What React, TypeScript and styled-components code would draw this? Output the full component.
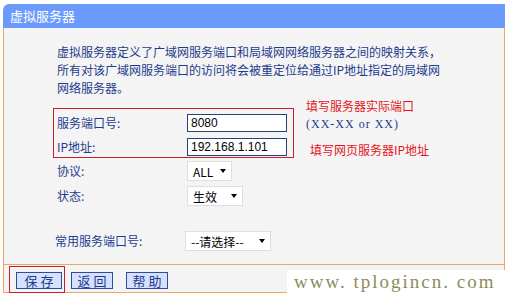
import styled, { createGlobalStyle } from "styled-components";

const GlobalStyle = createGlobalStyle`
  html, body {
    margin: 0;
    padding: 0;
    background: #ffffff;
  }
  body {
    font-family: "Noto Sans CJK SC", "Noto Sans", sans-serif;
  }
`;

const Page = styled.div`
  position: relative;
  width: 508px;
  height: 293px;
  overflow: hidden;
  box-sizing: border-box;
  padding: 4px 0 0 3px;
`;

const Panel = styled.div`
  width: 502px;
`;

const TitleBar = styled.div`
  height: 24px;
  padding-left: 7px;
  background: #6a9bfc;
  border-top-left-radius: 6px;
  color: #ffffff;
  font-size: 13px;
  line-height: 24px;
`;

const Body = styled.div`
  display: flex;
  flex-direction: column;
  align-items: flex-start;
  padding: 15px 0 13px 49px;
  background: #f4f4f4;
  border: 1px solid #f0a860;
  border-top: none;
`;

const Intro = styled.p`
  margin: 0 0 11px 4px;
  color: #1e3c8c;
  font-size: 12px;
  line-height: 18px;
`;

const Group = styled.div`
  display: flex;
  align-items: flex-start;
`;

const Marked = styled.div`
  display: flex;
  flex-direction: column;
  gap: 6px;
  width: 236px;
  padding: 5px 0 1px 3px;
  border: 1px solid #cc1d2c;
`;

const Hints = styled.div`
  display: flex;
  flex-direction: column;
  margin: -12px 0 0 12px;
`;

const Hint = styled.div<{ $indent?: number; $top?: number }>`
  margin: ${(p) => p.$top ?? 0}px 0 0 ${(p) => p.$indent ?? 0}px;
  color: #e3151c;
  font-size: 12px;
  line-height: 19px;
`;

const Format = styled.div`
  color: #1e3c8c;
  font-family: "Liberation Serif", serif;
  font-size: 12px;
  letter-spacing: 1px;
  line-height: 19px;
`;

const Row = styled.div<{ $top?: number; $pad?: number }>`
  display: grid;
  grid-template-columns: 130px auto;
  align-items: center;
  margin-top: ${(p) => p.$top ?? 0}px;
  padding-left: ${(p) => p.$pad ?? 0}px;
`;

const Label = styled.span`
  color: #1e3c8c;
  font-size: 12px;
  line-height: 18px;
`;

const TextInput = styled.input`
  box-sizing: border-box;
  display: block;
  width: 100px;
  height: 18px;
  margin: 0;
  padding: 0 3px;
  border: 1px solid #23437f;
  background: #ffffff;
  color: #000000;
  font-family: "Liberation Sans", sans-serif;
  font-size: 12px;
  outline: none;
`;

const SelectBox = styled.div<{ $width: number }>`
  box-sizing: border-box;
  display: flex;
  align-items: center;
  justify-content: space-between;
  width: ${(p) => p.$width}px;
  height: 20px;
  padding: 0 5px 0 5px;
  background: #ffffff;
  border: 1px solid #dedede;
  color: #000000;
  font-size: 12px;
`;

const Arrow = styled.span`
  width: 0;
  height: 0;
  border-left: 3.5px solid transparent;
  border-right: 3.5px solid transparent;
  border-top: 4px solid #000000;
`;

const Footer = styled.div`
  display: flex;
  align-items: flex-start;
  gap: 13px;
  height: 20px;
  padding: 7px 0 0 12px;
  background: #f4f4f4;
  border-left: 1px solid #f0a860;
  border-right: 1px solid #f0a860;
  border-bottom: 1px solid #f0a860;
`;

const SaveMark = styled.div`
  position: relative;
  margin-right: -4px;

  &::after {
    content: "";
    position: absolute;
    top: -6px;
    left: -7px;
    right: -3px;
    bottom: -4px;
    border: 1px solid #cc1d2c;
    pointer-events: none;
  }
`;

const Button = styled.button<{ $width: number }>`
  box-sizing: border-box;
  display: block;
  width: ${(p) => p.$width}px;
  height: 17px;
  margin: 0;
  padding: 0;
  background: #d6e0ff;
  border: 1px solid #2d4d9c;
  color: #1e3c8c;
  font-family: "Noto Sans CJK SC", sans-serif;
  font-size: 13px;
  line-height: 15px;
  letter-spacing: 3px;
  text-indent: 3px;
`;

const Watermark = styled.div`
  position: absolute;
  right: 0;
  bottom: 0;
  width: 221px;
  height: 23px;
  box-sizing: border-box;
  padding-left: 7px;
  background: #ffffff;
  color: #8d8b5a;
  font-family: "Liberation Serif", serif;
  font-size: 19px;
  letter-spacing: 2px;
  line-height: 23px;
  white-space: nowrap;
`;

const Select = ({ width, value }: { width: number; value: string }) => (
  <SelectBox $width={width}>
    <span>{value}</span>
    <Arrow />
  </SelectBox>
);

export default function App() {
  return (
    <Page>
      <GlobalStyle />
      <Panel>
        <TitleBar>虚拟服务器</TitleBar>
        <Body>
          <Intro>
            虚拟服务器定义了广域网服务端口和局域网网络服务器之间的映射关系，
            <br />
            所有对该广域网服务端口的访问将会被重定位给通过IP地址指定的局域网
            <br />
            网络服务器。
          </Intro>

          <Group>
            <Marked>
              <Row>
                <Label>服务端口号:</Label>
                <TextInput readOnly value="8080" />
              </Row>
              <Row>
                <Label>IP地址:</Label>
                <TextInput readOnly value="192.168.1.101" />
              </Row>
            </Marked>
            <Hints>
              <Hint>填写服务器实际端口</Hint>
              <Format>(XX-XX or XX)</Format>
              <Hint $indent={4} $top={6}>
                填写网页服务器IP地址
              </Hint>
            </Hints>
          </Group>

          <Row $top={2} $pad={4}>
            <Label>协议:</Label>
            <Select width={45} value="ALL" />
          </Row>
          <Row $top={5} $pad={4}>
            <Label>状态:</Label>
            <Select width={56} value="生效" />
          </Row>
          <Row $top={25} $pad={2}>
            <Label>常用服务端口号:</Label>
            <Select width={86} value="--请选择--" />
          </Row>
        </Body>
        <Footer>
          <SaveMark>
            <Button $width={46}>保存</Button>
          </SaveMark>
          <Button $width={42}>返回</Button>
          <Button $width={42}>帮助</Button>
        </Footer>
      </Panel>
      <Watermark>www. tplogincn. com</Watermark>
    </Page>
  );
}
